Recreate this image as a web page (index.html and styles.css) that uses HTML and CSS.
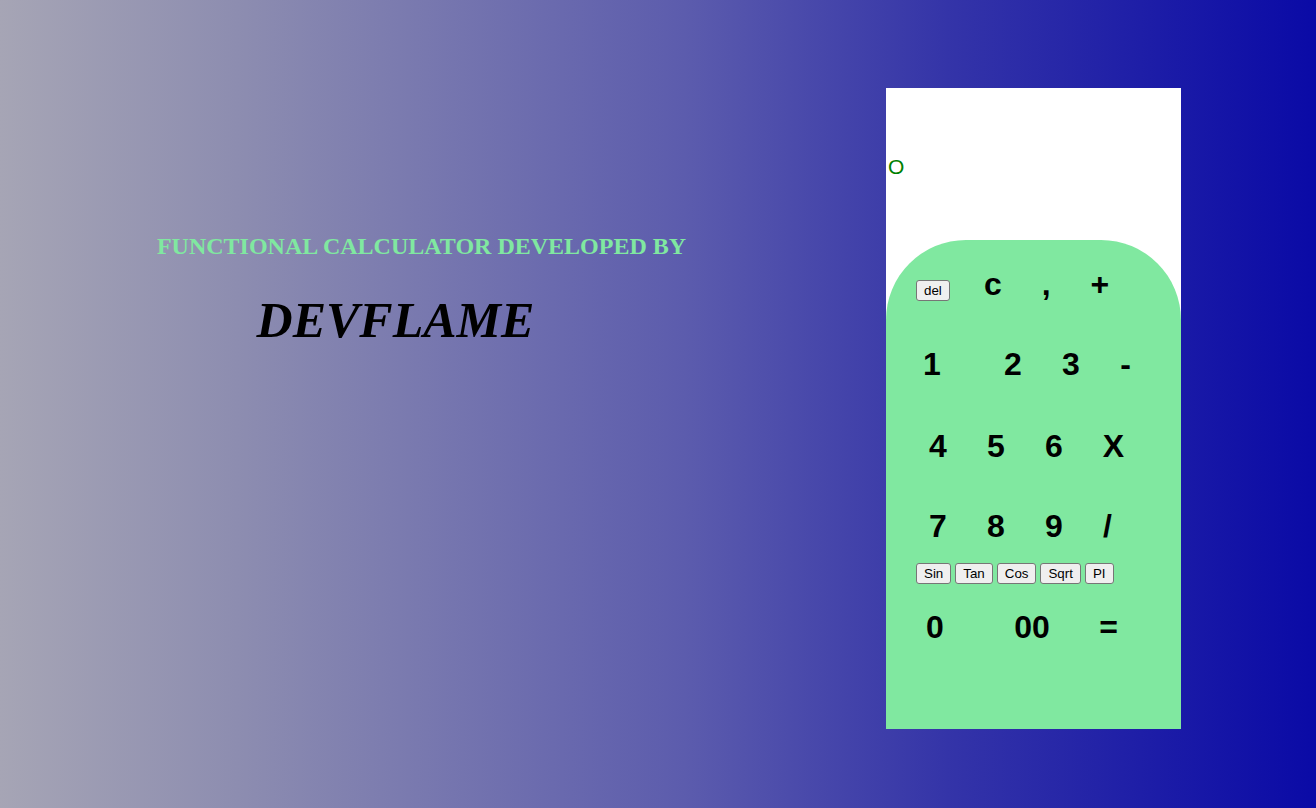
FILE: index.html
```html
<!DOCTYPE html>
<html>
<head>
<meta charset="utf-8">
<title>Calculator</title>
<link rel="stylesheet" href="styles.css">
</head>
<body>
<div class="page">
  <section class="intro">
    <h2 class="subtitle">FUNCTIONAL CALCULATOR DEVELOPED BY</h2>
    <h1 class="brand">DEVFLAME</h1>
  </section>
  <div class="calc">
    <div class="display">O</div>
    <div class="pad">
      <div class="row r1">
        <button class="small">del</button>
        <button class="key k-c">c</button>
        <button class="key k-narrow">,</button>
        <button class="key">+</button>
      </div>
      <div class="row r2">
        <button class="key k-one">1</button>
        <button class="key">2</button>
        <button class="key">3</button>
        <button class="key k-minus">-</button>
      </div>
      <div class="row r3">
        <button class="key">4</button>
        <button class="key">5</button>
        <button class="key">6</button>
        <button class="key k-x">X</button>
      </div>
      <div class="row r4">
        <button class="key">7</button>
        <button class="key">8</button>
        <button class="key">9</button>
        <button class="key k-narrow">/</button>
      </div>
      <div class="row r5">
        <button class="small">Sin</button>
        <button class="small">Tan</button>
        <button class="small">Cos</button>
        <button class="small">Sqrt</button>
        <button class="small">PI</button>
      </div>
      <div class="row r6">
        <button class="key">0</button>
        <button class="key k-dbl">00</button>
        <button class="key k-eq">=</button>
      </div>
    </div>
  </div>
</div>
</body>
</html>
```
FILE: styles.css
```css
html, body {
  margin: 0;
  padding: 0;
  height: 100%;
}
body {
  background: linear-gradient(90deg, #a6a5b5 0%, #8d8db0 18%, #6a6aae 42%, #5c5cad 52%, #3434a8 72%, #0a0aa6 100%);
  overflow: hidden;
}
.page {
  display: flex;
  align-items: flex-start;
  height: 808px;
}
.intro {
  width: 843px;
  text-align: center;
  padding-top: 233px;
  font-family: "Liberation Serif", "Times New Roman", serif;
}
.subtitle {
  margin: 0;
  font-size: 24px;
  font-weight: bold;
  color: #80e8a0;
  line-height: 26px;
}
.brand {
  margin: 32px 52px 0 0;
  font-size: 50px;
  font-weight: bold;
  font-style: italic;
  color: #000;
  line-height: 58px;
}
.calc {
  margin-left: 43px;
  margin-top: 88px;
  width: 295px;
  height: 641px;
  background: #fff;
  display: flex;
  flex-direction: column;
}
.display {
  height: 152px;
  box-sizing: border-box;
  padding: 67px 0 0 2px;
  font-family: "Liberation Sans", Arial, sans-serif;
  font-size: 21px;
  line-height: 24px;
  color: #008000;
}
.pad {
  flex: 1;
  background: #80e8a0;
  border-radius: 80px 80px 0 0;
  display: flex;
  flex-direction: column;
}
.row {
  display: flex;
  align-items: baseline;
}
.key {
  font-family: "Liberation Sans", Arial, sans-serif;
  font-size: 32px;
  font-weight: bold;
  line-height: 36px;
  height: 36px;
  width: 58px;
  padding: 0;
  border: 0;
  background: transparent;
  color: #000;
  text-align: center;
}
.k-narrow { width: 49px; }
.k-minus { width: 51px; }
.k-x { width: 61px; }
.k-dbl { width: 76px; margin-left: 30px; }
.k-eq { width: 59px; margin-left: 9px; }
.k-c { margin-left: 14px; }
.k-one { margin-right: 23px; }
.small {
  font-family: "Liberation Sans", Arial, sans-serif;
  font-size: 13.33px;
  line-height: 15px;
  padding: 2px 7px;
  border: 1px solid #767676;
  border-radius: 3px;
  background: #efefef;
  color: #000;
}
.r1 { margin-top: 26px; padding-left: 30px; }
.r2 { margin-top: 44px; padding-left: 17px; }
.r3 { margin-top: 46px; padding-left: 23px; }
.r4 { margin-top: 44px; padding-left: 23px; }
.r5 { margin-top: 19px; padding-left: 30px; gap: 4px; }
.r6 { margin-top: 25px; padding-left: 20px; }
```
